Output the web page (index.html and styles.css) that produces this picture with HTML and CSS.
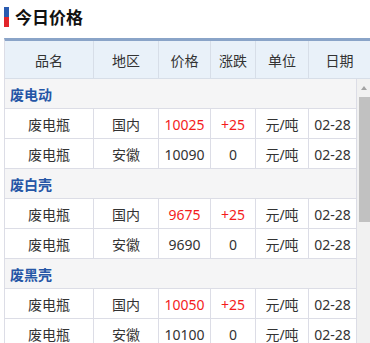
FILE: index.html
```html
<!DOCTYPE html>
<html lang="zh">
<head>
<meta charset="utf-8">
<title>今日价格</title>
<link rel="stylesheet" href="styles.css">
</head>
<body>
<div class="title">
  <span class="title-bar"></span>
  <h1 class="title-text">今日价格</h1>
</div>
<div class="price-table">
  <div class="row head">
    <div class="cell">品名</div>
    <div class="cell">地区</div>
    <div class="cell">价格</div>
    <div class="cell">涨跌</div>
    <div class="cell">单位</div>
    <div class="cell">日期</div>
  </div>
  <div class="body-wrap">
    <div class="body">
      <div class="group">废电动</div>
      <div class="row">
        <div class="cell">废电瓶</div><div class="cell">国内</div><div class="cell up">10025</div><div class="cell up">+25</div><div class="cell">元/吨</div><div class="cell">02-28</div>
      </div>
      <div class="row">
        <div class="cell">废电瓶</div><div class="cell">安徽</div><div class="cell">10090</div><div class="cell">0</div><div class="cell">元/吨</div><div class="cell">02-28</div>
      </div>
      <div class="group">废白壳</div>
      <div class="row">
        <div class="cell">废电瓶</div><div class="cell">国内</div><div class="cell up">9675</div><div class="cell up">+25</div><div class="cell">元/吨</div><div class="cell">02-28</div>
      </div>
      <div class="row">
        <div class="cell">废电瓶</div><div class="cell">安徽</div><div class="cell">9690</div><div class="cell">0</div><div class="cell">元/吨</div><div class="cell">02-28</div>
      </div>
      <div class="group">废黑壳</div>
      <div class="row">
        <div class="cell">废电瓶</div><div class="cell">国内</div><div class="cell up">10050</div><div class="cell up">+25</div><div class="cell">元/吨</div><div class="cell">02-28</div>
      </div>
      <div class="row">
        <div class="cell">废电瓶</div><div class="cell">安徽</div><div class="cell">10100</div><div class="cell">0</div><div class="cell">元/吨</div><div class="cell">02-28</div>
      </div>
    </div>
    <div class="scrollbar">
      <div class="sb-btn"><span class="sb-arrow"></span></div>
      <div class="sb-thumb"></div>
    </div>
  </div>
</div>
</body>
</html>
```
FILE: styles.css
```css
html, body {
  margin: 0;
  padding: 0;
  background: #fff;
  height: 343px;
  overflow: hidden;
}
body {
  font-family: "Noto Sans", "Noto Sans CJK SC", sans-serif;
  font-size: 14px;
  color: #333;
}
.title {
  display: flex;
  align-items: center;
  height: 38px;
  padding-left: 4px;
  box-sizing: border-box;
}
.title-bar {
  width: 5px;
  height: 20px;
  background: linear-gradient(#2a5bb0 0 50%, #e2242a 50% 100%);
  margin-right: 6px;
  margin-top: -5px;
}
.title-text {
  margin: -5px 0 0 0;
  font-size: 17px;
  font-weight: bold;
  color: #111;
  line-height: 20px;
  font-family: "Noto Sans CJK SC", sans-serif;
}
.price-table {
  margin-left: 4px;
  border-top: 3px solid #8aa4c8;
  border-left: 1px solid #dcdde6;
}
.row {
  display: grid;
  grid-template-columns: 89px 65px 52px 45px 53px 48px;
  height: 30px;
}
.cell {
  box-sizing: border-box;
  border-right: 1px solid #dcdde6;
  border-bottom: 1px solid #dcdde6;
  display: flex;
  align-items: center;
  justify-content: center;
  white-space: nowrap;
  padding-top: 1px;
}
.row.head {
  grid-template-columns: 89px 65px 52px 45px 53px 61px;
  height: 38px;
  background: #e9f1f9;
}
.row.head .cell {
  border-color: #d7dee8;
  padding-top: 0;
}
.row.head .cell:last-child {
  border-right: none;
}
.body-wrap {
  display: flex;
  height: 264px;
  overflow: hidden;
}
.body {
  width: 352px;
  flex: none;
}
.group {
  height: 30px;
  box-sizing: border-box;
  border-bottom: 1px solid #dcdde6;
  border-right: 1px solid #dcdde6;
  background: #f5f5f6;
  font-weight: bold;
  color: #2556a6;
  display: flex;
  align-items: center;
  padding-left: 5px;
  padding-top: 1px;
}
.up {
  color: #f41c1c;
}
.scrollbar {
  flex: 1;
  background: #f1f1f1;
  display: flex;
  flex-direction: column;
}
.sb-btn {
  height: 18px;
  display: flex;
  align-items: center;
  justify-content: center;
  padding-left: 1px;
}
.sb-arrow {
  width: 0;
  height: 0;
  border-left: 3.5px solid transparent;
  border-right: 3.5px solid transparent;
  border-bottom: 4px solid #a3a3a3;
}
.sb-thumb {
  margin-left: 2px;
  height: 125px;
  background: #c1c1c1;
}
```
